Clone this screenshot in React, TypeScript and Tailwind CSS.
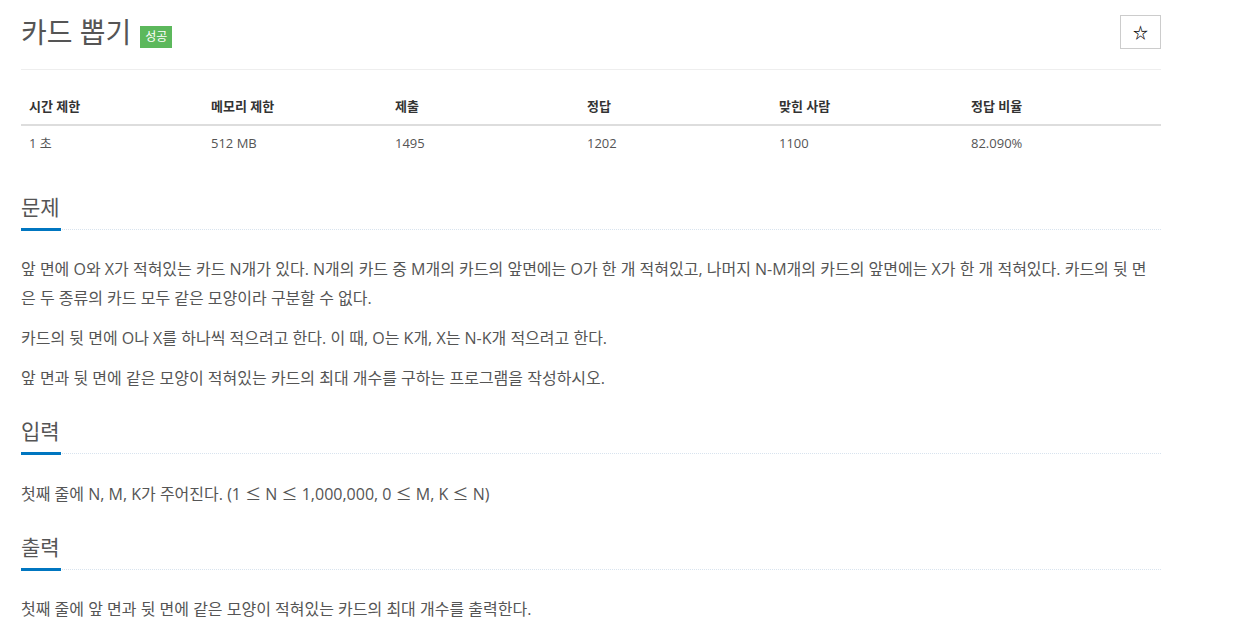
const font = { fontFamily: '"Open Sans", "Noto Sans CJK KR", sans-serif' };
const cjk = { fontFamily: '"Noto Sans CJK KR", sans-serif' };

const stats = [
  { label: "시간 제한", value: "1 초", w: "w-[182px]" },
  { label: "메모리 제한", value: "512 MB", w: "w-[184px]" },
  { label: "제출", value: "1495", w: "w-[192px]" },
  { label: "정답", value: "1202", w: "w-[192px]" },
  { label: "맞힌 사람", value: "1100", w: "w-[192px]" },
  { label: "정답 비율", value: "82.090%", w: "flex-1" },
];

function Section({ title, children }: { title: string; children: React.ReactNode }) {
  return (
    <section className="mt-[14px]">
      <div className="relative h-[47px] border-b border-dotted border-[#d8e3ee]">
        <h2 className="text-[21px] leading-[40px] text-[#555] pt-[4px]">{title}</h2>
        <div className="absolute left-0 bottom-[-2px] w-[40px] h-[3px] bg-[#0076c0]" />
      </div>
      <div className="pt-[25px] text-[16px] leading-[29px] text-[#555]">{children}</div>
    </section>
  );
}

const Le = () => <span style={cjk}>≤</span>;

export default function App() {
  return (
    <div className="bg-white min-h-[642px] w-[1250px]" style={font}>
      <div className="ml-[21px] w-[1140px]">
        <div className="flex items-center justify-between pt-[15px] pb-[20px] border-b border-[#eee]">
          <div className="flex items-center">
            <h1 className="text-[28px] leading-[34px] text-[#555]">카드 뽑기</h1>
            <span className="ml-[9px] mt-[10px] bg-[#5cb85c] text-white text-[12px] leading-[22px] px-[5px]">성공</span>
          </div>
          <button
            className="w-[41px] h-[34px] border border-[#ccc] bg-white text-black font-bold text-[15px] flex items-center justify-center"
            style={cjk}
          >
            ☆
          </button>
        </div>

        <div className="mt-[19px] mb-[22px] text-[13px]">
          <div className="flex border-b-2 border-[#ddd]">
            {stats.map((s) => (
              <div key={s.label} className={`${s.w} px-[8px] py-[8px] leading-[19px] font-bold text-[#333]`}>
                {s.label}
              </div>
            ))}
          </div>
          <div className="flex">
            {stats.map((s) => (
              <div key={s.label} className={`${s.w} px-[8px] py-[8px] leading-[19px] text-[#555]`}>
                {s.value}
              </div>
            ))}
          </div>
        </div>

        <Section title="문제">
          <p className="mb-[11px]">
            앞 면에 O와 X가 적혀있는 카드 N개가 있다. N개의 카드 중 M개의 카드의 앞면에는 O가 한 개 적혀있고, 나머지 N-M개의 카드의 앞면에는 X가 한 개 적혀있다. 카드의 뒷 면은 두 종류의 카드 모두 같은 모양이라 구분할 수 없다.
          </p>
          <p className="mb-[11px]">카드의 뒷 면에 O나 X를 하나씩 적으려고 한다. 이 때, O는 K개, X는 N-K개 적으려고 한다.</p>
          <p>앞 면과 뒷 면에 같은 모양이 적혀있는 카드의 최대 개수를 구하는 프로그램을 작성하시오.</p>
        </Section>

        <Section title="입력">
          <p>
            첫째 줄에 N, M, K가 주어진다. (1 <Le /> N <Le /> 1,000,000, 0 <Le /> M, K <Le /> N)
          </p>
        </Section>

        <Section title="출력">
          <p>첫째 줄에 앞 면과 뒷 면에 같은 모양이 적혀있는 카드의 최대 개수를 출력한다.</p>
        </Section>
      </div>
    </div>
  );
}
